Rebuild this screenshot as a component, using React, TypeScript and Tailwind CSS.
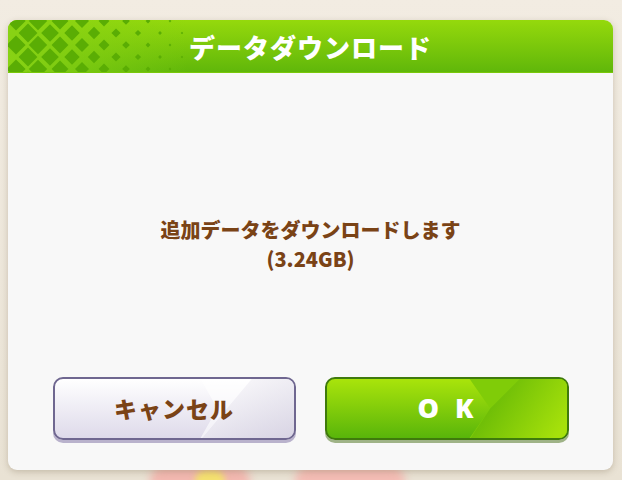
import React from 'react';

const JP = { fontFamily: '"Noto Sans CJK JP", "Noto Sans", sans-serif' };

// left-side lattice in the title bar: diamonds that shrink toward the right
const HeaderPattern: React.FC = () => {
  const cells: React.ReactNode[] = [];
  const sizes = [9.6, 9.2, 8.4, 7, 5.4, 3.8, 2.4, 1.4];
  for (let col = 0; col < sizes.length; col++) {
    for (let row = 0; row < 6; row++) {
      const odd = row % 2 === 1;
      const cx = (odd ? 20 : 8) + col * 22;
      const cy = 1 + row * 12;
      const s = odd ? (sizes[col] + (sizes[col + 1] ?? 1)) / 2 : sizes[col];
      cells.push(
        <path
          key={`${col}-${row}`}
          d={`M${cx} ${cy - s}L${cx + s} ${cy}L${cx} ${cy + s}L${cx - s} ${cy}Z`}
          fill="#5aad04"
        />
      );
    }
  }
  return (
    <svg className="absolute left-0 top-0" width="180" height="52" viewBox="0 0 180 52">
      <defs>
        <linearGradient id="hp" x1="0" y1="0" x2="1" y2="0">
          <stop offset="0" stopColor="#88d214" stopOpacity="1" />
          <stop offset="1" stopColor="#88d214" stopOpacity="0" />
        </linearGradient>
      </defs>
      <rect x="0" y="0" width="180" height="52" fill="url(#hp)" />
      {cells}
    </svg>
  );
};

const CancelButton: React.FC = () => (
  <button className="relative h-[63px] w-[243px] overflow-hidden rounded-[10px] border-2 border-[#6f6790] bg-gradient-to-b from-[#ffffff] to-[#dedaea] shadow-[0_3px_0_#b9b2cc]">
    <svg className="absolute inset-0" width="100%" height="100%" viewBox="0 0 243 60" preserveAspectRatio="none">
      <defs>
        <linearGradient id="cg" x1="0" y1="0" x2="1" y2="1">
          <stop offset="0" stopColor="#ffffff" stopOpacity="0.9" />
          <stop offset="1" stopColor="#d4d0e0" stopOpacity="0.6" />
        </linearGradient>
      </defs>
      <path d="M148 0L200 0L150 60L148 60L165 30Z" fill="#ffffff" opacity="0.6" />
      <path d="M200 0L243 0L243 60L150 60Z" fill="url(#cg)" />
    </svg>
    <span className="relative text-[23px] font-black tracking-[1px] text-[#7a4316]" style={JP}>
      キャンセル
    </span>
  </button>
);

const OkButton: React.FC = () => (
  <button className="relative h-[63px] w-[244px] overflow-hidden rounded-[10px] border-2 border-[#3f7a0c] bg-gradient-to-b from-[#a9e40b] to-[#58b50a] shadow-[0_3px_0_#9fb387]">
    <svg className="absolute inset-0" width="100%" height="100%" viewBox="0 0 244 60" preserveAspectRatio="none">
      <defs>
        <linearGradient id="og" x1="0" y1="0.3" x2="1" y2="0.7">
          <stop offset="0" stopColor="#5eb306" />
          <stop offset="1" stopColor="#a6e10b" />
        </linearGradient>
      </defs>
      <path d="M145 0L244 0L244 60L145 60L166 30Z" fill="#80cc08" />
      <path d="M196 0L244 0L244 60L146 60L166 30Z" fill="url(#og)" />
    </svg>
    <span className="relative pl-[14px] text-[27px] font-black tracking-[16px] text-white" style={{ fontFamily: '"Open Sans", "Noto Sans", sans-serif' }}>
      OK
    </span>
  </button>
);

export default function App() {
  return (
    <div className="relative h-[480px] w-[622px] overflow-hidden bg-gradient-to-b from-[#f2ece2] to-[#e9e2d4] pb-[10px] pl-[8px] pr-[9px] pt-[20px]">
      {/* blurred scenery peeking under the dialog */}
      <div className="absolute bottom-[-16px] left-[150px] h-[30px] w-[100px] rounded-full bg-[#f2b8b0] blur-[4px]" />
      <div className="absolute bottom-[-12px] left-[195px] h-[22px] w-[30px] rounded-full bg-[#f4e070] blur-[3px]" />
      <div className="absolute bottom-[-16px] left-[295px] h-[30px] w-[110px] rounded-full bg-[#f3bcb4] blur-[4px]" />

      <div className="relative flex h-full flex-col overflow-hidden rounded-[9px] bg-[#f8f8f8] shadow-[0_2px_6px_rgba(90,70,40,0.25)]">
        <div className="relative flex h-[52px] items-center justify-center bg-gradient-to-b from-[#95d90c] to-[#60b70a] shadow-[0_1px_0_#79c80a]">
          <HeaderPattern />
          <h1 className="relative text-[26px] font-black tracking-[1px] text-white" style={JP}>
            データダウンロード
          </h1>
        </div>

        <div className="flex flex-1 flex-col items-center">
          <div className="mt-[143px] text-center text-[20px] font-black leading-[29px] text-[#7a4316]" style={JP}>
            <p>追加データをダウンロードします</p>
            <p>(3.24GB)</p>
          </div>
          <div className="mt-[104px] flex gap-[29px]">
            <CancelButton />
            <OkButton />
          </div>
        </div>
      </div>
    </div>
  );
}
